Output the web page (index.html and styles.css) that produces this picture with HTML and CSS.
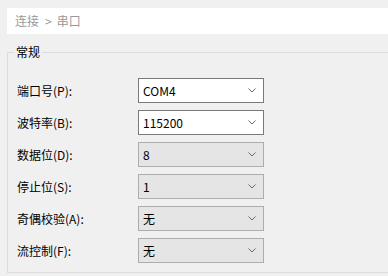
FILE: index.html
```html
<!DOCTYPE html>
<html lang="zh-CN">
<head>
    <meta charset="UTF-8">
    <title>串口设置</title>
    <link rel="stylesheet" href="styles.css">
</head>
<body>

    <!-- Breadcrumb -->
    <div class="crumb">连接<span class="sep">&gt;</span>串口</div>

    <fieldset class="group">
        <legend>常规</legend>

        <div class="form">
            <label>端口号(P):</label>
            <div class="combo">COM4<svg class="arrow" width="8" height="5" viewBox="0 0 8 5"><path d="M0.5 0.5 L4 4 L7.5 0.5" fill="none" stroke="#666" stroke-width="1"/></svg></div>

            <label>波特率(B):</label>
            <div class="combo">115200<svg class="arrow" width="8" height="5" viewBox="0 0 8 5"><path d="M0.5 0.5 L4 4 L7.5 0.5" fill="none" stroke="#666" stroke-width="1"/></svg></div>

            <label>数据位(D):</label>
            <div class="combo disabled">8<svg class="arrow" width="8" height="5" viewBox="0 0 8 5"><path d="M0.5 0.5 L4 4 L7.5 0.5" fill="none" stroke="#666" stroke-width="1"/></svg></div>

            <label>停止位(S):</label>
            <div class="combo disabled">1<svg class="arrow" width="8" height="5" viewBox="0 0 8 5"><path d="M0.5 0.5 L4 4 L7.5 0.5" fill="none" stroke="#666" stroke-width="1"/></svg></div>

            <label>奇偶校验(A):</label>
            <div class="combo disabled">无<svg class="arrow" width="8" height="5" viewBox="0 0 8 5"><path d="M0.5 0.5 L4 4 L7.5 0.5" fill="none" stroke="#666" stroke-width="1"/></svg></div>

            <label>流控制(F):</label>
            <div class="combo disabled">无<svg class="arrow" width="8" height="5" viewBox="0 0 8 5"><path d="M0.5 0.5 L4 4 L7.5 0.5" fill="none" stroke="#666" stroke-width="1"/></svg></div>
        </div>
    </fieldset>

</body>
</html>
```

FILE: styles.css
```css
body {
    margin: 0;
    padding-top: 8px;
    background-color: #f0f0f0;
    font-family: "Noto Sans CJK SC", "Noto Sans", sans-serif;
    font-size: 12px;
    color: #000;
    overflow: hidden;
}
.crumb {
    margin-left: 7px;
    height: 26px;
    line-height: 26px;
    padding-left: 8px;
    background-color: #fff;
    color: #999;
}
.sep {
    margin: 0 5px 0 6px;
}
.group {
    margin: 10px 0 0 7px;
    padding: 0 0 9px 0;
    border: 1px solid #dcdcdc;
    border-right: none;
}
.group legend {
    margin-left: 6px;
    padding: 0 2px;
    line-height: 16px;
}
.form {
    display: grid;
    grid-template-columns: 121px 126px;
    grid-auto-rows: 25px;
    row-gap: 7px;
    padding: 18px 0 0 9px;
}
.form label {
    display: flex;
    align-items: center;
}
.combo {
    display: flex;
    align-items: center;
    justify-content: space-between;
    box-sizing: border-box;
    padding: 0 7px 0 4px;
    border: 1px solid #7a7a7a;
    background-color: #fff;
}
.combo.disabled {
    border-color: #adadad;
    background-color: #e5e5e5;
}
.arrow {
    display: block;
}
```
